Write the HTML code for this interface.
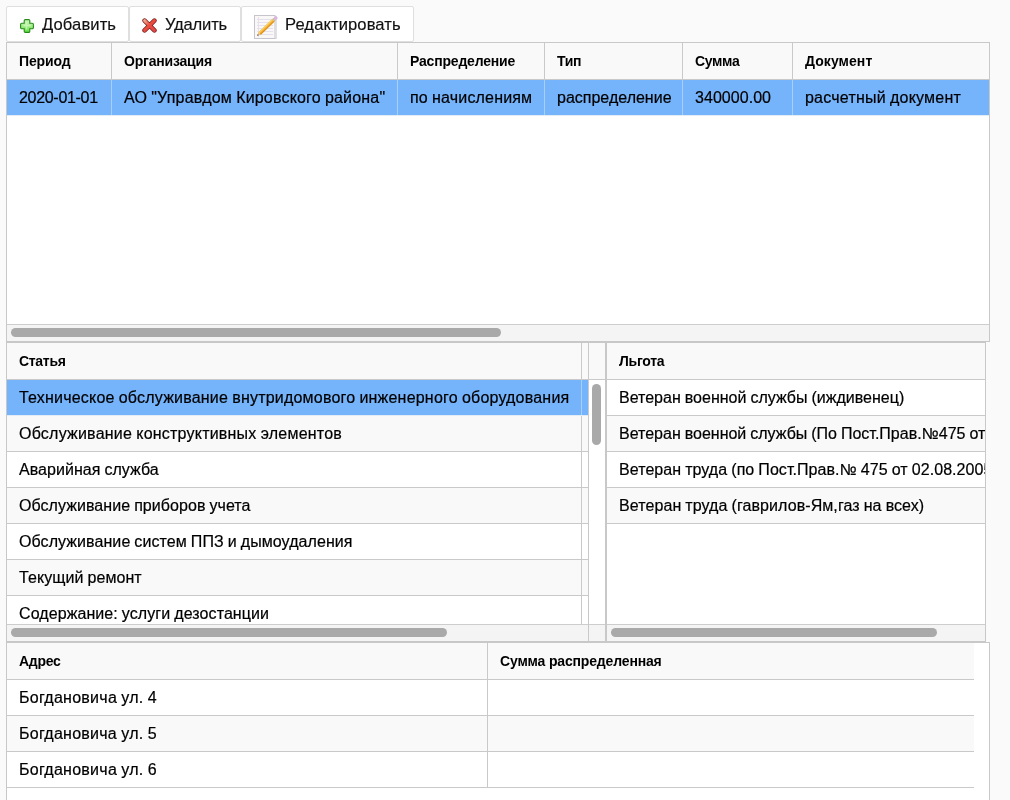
<!DOCTYPE html>
<html lang="ru">
<head>
<meta charset="utf-8">
<title>Распределение</title>
<style>
*{box-sizing:border-box;margin:0;padding:0}
html,body{width:1010px;height:800px;overflow:hidden;background:#fafafa}
body{position:relative;will-change:transform;font-family:"Liberation Sans",Arial,sans-serif;color:#000;font-size:16px}
.abs{position:absolute}
.btn{position:absolute;top:6px;height:36px;background:#fff;border:1px solid #dfdfdf;border-radius:2px;white-space:nowrap}
.btn span{-webkit-text-stroke:0.15px #111;position:absolute;top:8px;font-size:16.6px;line-height:20px;color:#111}
.btn svg{position:absolute}
.panel{position:absolute;background:#fff;border:1px solid #c8c8c8;overflow:hidden}
.hd{position:absolute;height:37px;background:#f9f9f9;border-bottom:1px solid #c9c9c9}
.hc{position:absolute;top:0;height:36px;border-left:1px solid #c9c9c9;font-weight:bold;font-size:14px;line-height:37px;padding-left:12px;white-space:nowrap;overflow:hidden}
.row{position:absolute;height:36px;border-bottom:1px solid #c9c9c9;background:#fff}
.row.alt{background:#f9f9f9}
.row.sel{background:#75b3fb;border-bottom-color:#e3ebf5}
.c{word-spacing:-0.5px;-webkit-text-stroke:0.2px #000;position:absolute;top:0;height:35px;border-left:1px solid #c9c9c9;font-size:16px;line-height:35px;padding-left:12px;white-space:nowrap;overflow:hidden}
.sel .c{border-left-color:#a6cffb}
.sb{position:absolute;background:#f4f4f4;border-top:1px solid #cdcdcd}
.th{position:absolute;background:#a9a9a9;border-radius:4.5px}
</style>
</head>
<body>
<div class="btn" style="left:6px;width:123px"><svg style="left:13px;top:12px" width="14" height="14" viewBox="0 0 14 14"><defs><linearGradient id="ga" x1="0" y1="0" x2="0" y2="1"><stop offset="0" stop-color="#d0f7c0"/><stop offset="0.5" stop-color="#a2ee86"/><stop offset="1" stop-color="#62de40"/></linearGradient></defs><path d="M5.400 0.600h3.200a1.200 1.200 0 0 1 1.200 1.200v2.400h2.400a1.200 1.200 0 0 1 1.200 1.200v3.200a1.200 1.200 0 0 1-1.200 1.200H9.800v2.400a1.200 1.200 0 0 1-1.200 1.200H5.400a1.200 1.200 0 0 1-1.200-1.200V9.800H1.800A1.200 1.200 0 0 1 .6 8.600V5.400a1.200 1.200 0 0 1 1.200-1.200h2.400V1.800a1.200 1.200 0 0 1 1.200-1.200z" fill="url(#ga)" stroke="#258a1a" stroke-width="1.100"/><path d="M6.500 3.500v7M3.500 6.500h7" fill="none" stroke="#e9fbe2" stroke-width="1.400" opacity="0.550"/></svg>
<span id="b1" style="left:35px;letter-spacing:0.095px">Добавить</span></div>
<div class="btn" style="left:129px;width:112px"><svg style="left:12px;top:11px" width="15" height="15" viewBox="0 0 15 15"><defs><linearGradient id="gd" x1="0" y1="0" x2="1" y2="1"><stop offset="0" stop-color="#f4a48c"/><stop offset="0.450" stop-color="#ea4c3e"/><stop offset="1" stop-color="#e04848"/></linearGradient></defs><path d="M2.600 2.600l9.800 9.800M12.400 2.600l-9.800 9.800" stroke="#7c1c1c" stroke-width="4.600" stroke-linecap="round" fill="none"/><path d="M2.600 2.600l9.800 9.800M12.400 2.600l-9.800 9.800" stroke="url(#gd)" stroke-width="3" stroke-linecap="round" fill="none"/></svg>
<span id="b2" style="left:35px;letter-spacing:-0.188px">Удалить</span></div>
<div class="btn" style="left:241px;width:173px"><svg style="left:11px;top:7px" width="26" height="26" viewBox="0 0 26 26"><rect x="3.500" y="2.500" width="20" height="22" fill="#f6f5f8" stroke="#e1e0e8"/><rect x="1.500" y="1.500" width="20.500" height="23" fill="#f9f8f6" stroke="#c6c5cd"/><path d="M4 5.500h16M4 8.500h16M4 11.500h16M4 14.500h16M4 17.500h16M4 20.500h16" stroke="#e3e0ef" stroke-width="1"/><path d="M5.500 3v20" stroke="#eadfe9" stroke-width="1"/><g transform="translate(4.200,21.800) rotate(-43.800)"><path d="M0 0L3.400-1.650V1.650z" fill="#e6c38c"/><path d="M0 0L1.500-.75V.75z" fill="#2e2216"/><rect x="3.400" y="-1.650" width="19" height="3.300" fill="#f2ab2c"/><rect x="3.400" y="-1.650" width="19" height="1.300" fill="#fbd264"/><rect x="3.400" y=".85" width="19" height=".8" fill="#d98d1a"/><rect x="22.400" y="-1.650" width="1.600" height="3.300" fill="#c9bb98"/><rect x="24" y="-1.650" width="3.300" height="3.300" rx="1" fill="#dcb4e2"/></g></svg>
<span id="b3" style="left:43px;letter-spacing:0.083px">Редактировать</span></div>
<div class="panel" style="left:6px;top:42px;width:984px;height:300px">
<div class="hd" style="left:0px;top:0px;width:982px"><div class="hc" style="left:0px;width:104px;border-left:0"><span id="h10" style="letter-spacing:-0.127px">Период</span></div><div class="hc" style="left:104px;width:286px"><span id="h11" style="letter-spacing:-0.195px">Организация</span></div><div class="hc" style="left:390px;width:147px"><span id="h12" style="letter-spacing:-0.187px">Распределение</span></div><div class="hc" style="left:537px;width:138px"><span id="h13" style="letter-spacing:-0.364px">Тип</span></div><div class="hc" style="left:675px;width:110px"><span id="h14" style="letter-spacing:-0.336px">Сумма</span></div><div class="hc" style="left:785px;width:197px"><span id="h15" style="letter-spacing:0.069px">Документ</span></div></div>
<div class="row sel" style="left:0px;top:37px;width:982px"><div class="c" style="left:0px;width:104px;border-left:0"><span id="r10" style="letter-spacing:-0.309px">2020-01-01</span></div><div class="c" style="left:104px;width:286px"><span id="r11" style="letter-spacing:0.182px">АО "Управдом Кировского района"</span></div><div class="c" style="left:390px;width:147px"><span id="r12" style="letter-spacing:0.174px">по начислениям</span></div><div class="c" style="left:537px;width:138px"><span id="r13" style="letter-spacing:0.003px">распределение</span></div><div class="c" style="left:675px;width:110px"><span id="r14" style="letter-spacing:0.048px">340000.00</span></div><div class="c" style="left:785px;width:197px"><span id="r15" style="letter-spacing:0.214px">расчетный документ</span></div></div>
<div class="sb" style="left:0;top:281px;width:982px;height:17px"><div class="th" style="left:4px;top:3px;width:490px;height:9px"></div></div>
</div>
<div class="panel" style="left:6px;top:342px;width:980px;height:300px">
<div class="hd" style="left:0px;top:0px;width:582px"><div class="hc" style="left:0px;width:574px;border-left:0"><span id="h20" style="letter-spacing:-0.304px">Статья</span></div><div class="hc" style="left:574px;width:8px;padding:0"></div></div>
<div class="row sel" style="left:0px;top:37px;width:582px"><div class="c" style="left:0px;width:574px;border-left:0"><span id="a0" style="letter-spacing:0.201px">Техническое обслуживание внутридомового инженерного оборудования</span></div><div class="c" style="left:574px;width:8px;padding:0"></div></div>
<div class="row alt" style="left:0px;top:73px;width:582px"><div class="c" style="left:0px;width:574px;border-left:0"><span id="a1" style="letter-spacing:0.218px">Обслуживание конструктивных элементов</span></div><div class="c" style="left:574px;width:8px;padding:0"></div></div>
<div class="row " style="left:0px;top:109px;width:582px"><div class="c" style="left:0px;width:574px;border-left:0"><span id="a2" style="letter-spacing:0.038px">Аварийная служба</span></div><div class="c" style="left:574px;width:8px;padding:0"></div></div>
<div class="row alt" style="left:0px;top:145px;width:582px"><div class="c" style="left:0px;width:574px;border-left:0"><span id="a3" style="letter-spacing:0.056px">Обслуживание приборов учета</span></div><div class="c" style="left:574px;width:8px;padding:0"></div></div>
<div class="row " style="left:0px;top:181px;width:582px"><div class="c" style="left:0px;width:574px;border-left:0"><span id="a4" style="letter-spacing:0.073px">Обслуживание систем ППЗ и дымоудаления</span></div><div class="c" style="left:574px;width:8px;padding:0"></div></div>
<div class="row alt" style="left:0px;top:217px;width:582px"><div class="c" style="left:0px;width:574px;border-left:0"><span id="a5" style="letter-spacing:0.066px">Текущий ремонт</span></div><div class="c" style="left:574px;width:8px;padding:0"></div></div>
<div class="row " style="left:0px;top:253px;width:582px;height:28px;border-bottom:0"><div class="c" style="left:0px;width:574px;border-left:0"><span id="a6" style="letter-spacing:0.081px">Содержание: услуги дезостанции</span></div><div class="c" style="left:574px;width:8px;padding:0"></div></div>
<div class="sb" style="left:0;top:281px;width:598px;height:17px"><div class="th" style="left:4px;top:3px;width:436px;height:9px"></div></div>
<div class="abs" style="left:582px;top:37px;width:16px;height:244px;background:#fff"></div>
<div class="abs" style="left:582px;top:0;width:16px;height:36px;background:#f9f9f9"></div>
<div class="abs" style="left:582px;top:36px;width:16px;height:1px;background:#c9c9c9"></div>
<div class="abs" style="left:581px;top:0;width:1px;height:298px;background:#c9c9c9"></div>
<div class="abs" style="left:598px;top:0;width:2px;height:298px;background:#c8c8c8"></div>
<div class="th" style="left:585px;top:41px;width:9px;height:61px"></div>
<div class="hd" style="left:600px;top:0px;width:378px"><div class="hc" style="left:0px;width:378px;border-left:0"><span id="h21" style="letter-spacing:-0.271px">Льгота</span></div></div>
<div class="row " style="left:600px;top:37px;width:378px"><div class="c" style="left:0px;width:378px;border-left:0"><span id="l0" style="letter-spacing:0.009px">Ветеран военной службы (иждивенец)</span></div></div>
<div class="row alt" style="left:600px;top:73px;width:378px"><div class="c" style="left:0px;width:378px;border-left:0"><span id="l1" style="letter-spacing:0.001px">Ветеран военной службы (По Пост.Прав.№475 от 02.08.2005)</span></div></div>
<div class="row " style="left:600px;top:109px;width:378px"><div class="c" style="left:0px;width:378px;border-left:0"><span id="l2" style="letter-spacing:0.063px">Ветеран труда (по Пост.Прав.№ 475 от 02.08.2005)</span></div></div>
<div class="row alt" style="left:600px;top:145px;width:378px"><div class="c" style="left:0px;width:378px;border-left:0"><span id="l3" style="letter-spacing:0.083px">Ветеран труда (гаврилов-Ям,газ на всех)</span></div></div>
<div class="sb" style="left:600px;top:281px;width:378px;height:17px"><div class="th" style="left:4px;top:3px;width:326px;height:9px"></div></div>
</div>
<div class="panel" style="left:6px;top:642px;width:984px;height:170px">
<div class="hd" style="left:0px;top:0px;width:967px"><div class="hc" style="left:0px;width:480px;border-left:0"><span id="h30" style="letter-spacing:-0.267px">Адрес</span></div><div class="hc" style="left:480px;width:487px"><span id="h31" style="letter-spacing:-0.164px">Сумма распределенная</span></div></div>
<div class="row " style="left:0px;top:37px;width:967px"><div class="c" style="left:0px;width:480px;border-left:0"><span id="d0" style="letter-spacing:0.264px">Богдановича ул. 4</span></div><div class="c" style="left:480px;width:487px;padding:0"></div></div>
<div class="row alt" style="left:0px;top:73px;width:967px"><div class="c" style="left:0px;width:480px;border-left:0"><span id="d1" style="letter-spacing:0.260px">Богдановича ул. 5</span></div><div class="c" style="left:480px;width:487px;padding:0"></div></div>
<div class="row " style="left:0px;top:109px;width:967px"><div class="c" style="left:0px;width:480px;border-left:0"><span id="d2" style="letter-spacing:0.262px">Богдановича ул. 6</span></div><div class="c" style="left:480px;width:487px;padding:0"></div></div>
</div>
</body>
</html>
